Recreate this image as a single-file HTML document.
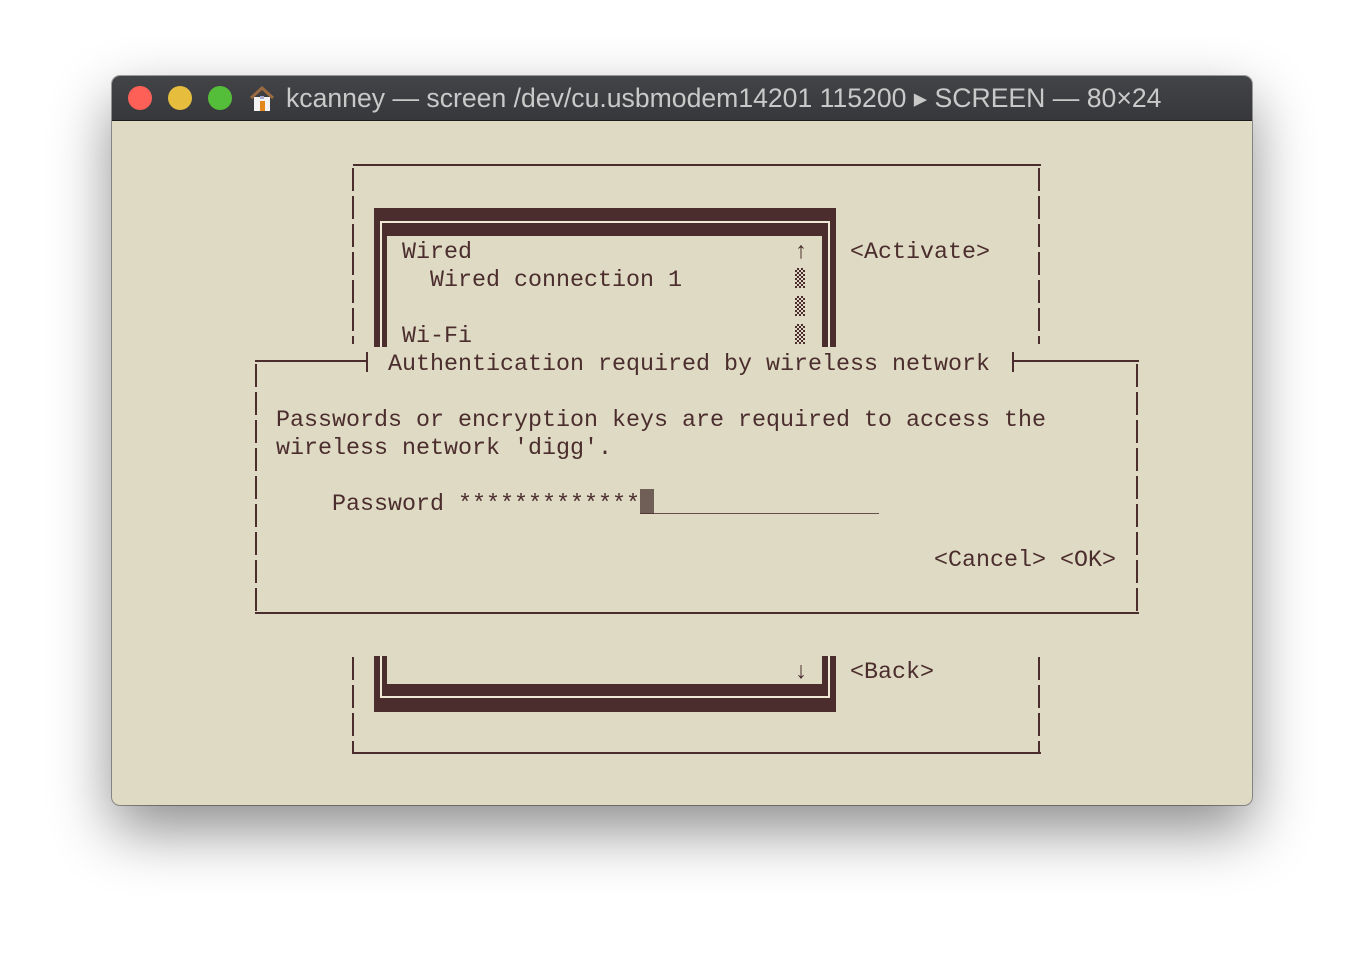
<!DOCTYPE html>
<html><head><meta charset="utf-8"><style>
body{margin:0;width:1364px;height:954px;background:#fff;position:relative;overflow:hidden;font-family:"Liberation Sans",sans-serif}
.win{position:absolute;left:112px;top:76px;width:1140px;height:729px;border-radius:8px;background:#dfdac4;box-shadow:0 25px 60px rgba(0,0,0,.45),0 0 0 1px rgba(0,0,0,.35);overflow:hidden}
.tb{position:absolute;left:0;top:0;width:100%;height:44px;background:linear-gradient(#434447,#37383b);border-bottom:1px solid #1c1c1c}
.dot{position:absolute;top:10px;width:24px;height:24px;border-radius:50%}
.title{position:absolute;left:174px;top:7px;color:#c9c9c9;font-size:26.6px;white-space:nowrap}
.t{position:absolute;font-family:"Liberation Mono",monospace;font-size:23.33px;color:#4b2d2d;white-space:pre;line-height:28px;margin-top:3px}
.d{position:absolute;background:#4b2d2d}
.vd{position:absolute;width:2px;background:repeating-linear-gradient(#4b2d2d 0 23px,transparent 23px 28px)}
.l{position:absolute;background:#efe9d6}
.ck{position:absolute;width:10px;height:20px;background:repeating-conic-gradient(#4b2d2d 0 25%,transparent 0 50%) 0 0/4px 4px}
</style></head><body>
<div class="win">
<div class="tb">
<div class="dot" style="left:16px;background:#fe5f57"></div>
<div class="dot" style="left:56px;background:#e6bd3d"></div>
<div class="dot" style="left:96px;background:#54be3a"></div>
<svg style="position:absolute;left:137px;top:10px" width="26" height="26" viewBox="0 0 26 26"><path d="M2 12L13 2L24 12" fill="none" stroke="#9a6a40" stroke-width="3"/><rect x="5" y="11" width="16" height="14" fill="#f2f2f2"/><rect x="11" y="15" width="5" height="10" fill="#e5861a"/><rect x="11" y="10" width="4" height="3" fill="#aac"/></svg>
<div class="title">kcanney — screen /dev/cu.usbmodem14201 115200 ▸ SCREEN — 80×24</div>
</div>
</div>
<div class="d" style="left:353px;top:164px;width:688px;height:2px"></div>
<div class="vd" style="left:352px;top:168px;height:176px"></div>
<div class="vd" style="left:1038px;top:168px;height:176px"></div>
<div class="vd" style="left:352px;top:657px;height:96px"></div>
<div class="vd" style="left:1038px;top:657px;height:96px"></div>
<div class="d" style="left:352px;top:752px;width:689px;height:2px"></div>
<div class="d" style="left:374px;top:208px;width:462px;height:28px"></div>
<div class="d" style="left:374px;top:208px;width:13px;height:139px"></div>
<div class="d" style="left:822px;top:208px;width:14px;height:139px"></div>
<div class="l" style="left:380px;top:221px;width:450px;height:2px"></div>
<div class="l" style="left:380px;top:221px;width:2px;height:126px"></div>
<div class="l" style="left:828px;top:221px;width:2px;height:126px"></div>
<div class="t" style="left:402px;top:236px">Wired</div>
<div class="t" style="left:430px;top:264px">Wired connection 1</div>
<div class="t" style="left:402px;top:320px">Wi-Fi</div>
<div class="t" style="left:794px;top:236px">↑</div>
<div class="ck" style="left:795px;top:268px"></div>
<div class="ck" style="left:795px;top:296px"></div>
<div class="ck" style="left:795px;top:324px"></div>
<div class="t" style="left:850px;top:236px">&lt;Activate&gt;</div>
<div class="d" style="left:255px;top:360px;width:113px;height:2px"></div>
<div class="d" style="left:366px;top:352px;width:2px;height:20px"></div>
<div class="d" style="left:1012px;top:360px;width:127px;height:2px"></div>
<div class="d" style="left:1012px;top:352px;width:2px;height:20px"></div>
<div class="vd" style="left:255px;top:364px;height:248px"></div>
<div class="vd" style="left:1136px;top:364px;height:248px"></div>
<div class="d" style="left:255px;top:612px;width:884px;height:2px"></div>
<div class="t" style="left:388px;top:348px">Authentication required by wireless network</div>
<div class="t" style="left:276px;top:404px">Passwords or encryption keys are required to access the</div>
<div class="t" style="left:276px;top:432px">wireless network 'digg'.</div>
<div class="t" style="left:332px;top:488px">Password *************</div>
<div style="position:absolute;left:640px;top:489px;width:14px;height:25px;background:#6f5f57"></div>
<div class="d" style="left:640px;top:513px;width:239px;height:1px;opacity:.8"></div>
<div class="t" style="left:934px;top:544px">&lt;Cancel&gt; &lt;OK&gt;</div>
<div class="d" style="left:374px;top:656px;width:13px;height:56px"></div>
<div class="d" style="left:822px;top:656px;width:14px;height:56px"></div>
<div class="d" style="left:374px;top:684px;width:462px;height:28px"></div>
<div class="l" style="left:380px;top:656px;width:2px;height:42px"></div>
<div class="l" style="left:828px;top:656px;width:2px;height:42px"></div>
<div class="l" style="left:380px;top:696px;width:450px;height:2px"></div>
<div class="t" style="left:794px;top:656px">↓</div>
<div class="t" style="left:850px;top:656px">&lt;Back&gt;</div>
</body></html>
